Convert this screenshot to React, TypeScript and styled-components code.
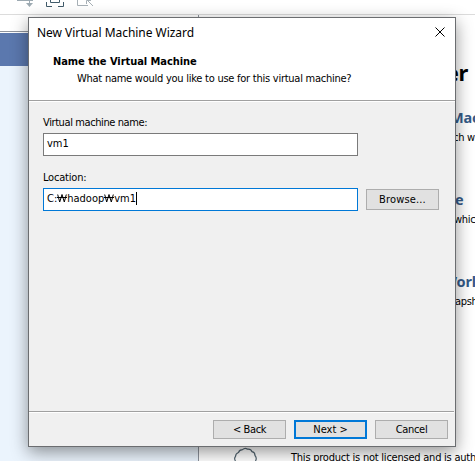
import React from "react";
import styled, { createGlobalStyle } from "styled-components";

const GlobalStyle = createGlobalStyle`
  body { margin: 0; overflow: hidden; background: #fff; }
  * { box-sizing: border-box; }
`;

const Desktop = styled.div`
  position: relative;
  display: flex;
  flex-direction: column;
  width: 475px;
  height: 461px;
  overflow: hidden;
  background: #fff;
  color: #000;
  font-family: "DejaVu Sans Condensed", "DejaVu Sans", "Noto Sans", sans-serif;
  font-stretch: condensed;
  font-size: 11px;
  line-height: 14px;
`;

const Toolbar = styled.div`
  height: 15px;
  flex: none;
  border-bottom: 1px solid #dcdcdc;
`;

const Workspace = styled.div`
  display: flex;
  flex: 1;
  min-height: 0;
`;

const Library = styled.div`
  display: flex;
  flex-direction: column;
  flex: none;
  width: 199px;
  border-right: 1px solid #8c929b;
  background: #ebf4fd;
`;

const LibraryTabs = styled.div`
  height: 18px;
  background: #fff;
  border-bottom: 1px solid #fff;
  box-shadow: inset 0 -1px #8e939c;
`;

const LibraryHeader = styled.div`
  height: 33px;
  background: #5b78ae;
`;

const Home = styled.div`
  flex: 1;
  min-width: 0;
  display: flex;
  flex-direction: column;
  align-items: flex-end;
  overflow: hidden;
  white-space: nowrap;
`;

const HomeTitle = styled.div`
  margin: 42px 7px 19px 0;
  height: 30px;
  font: 700 22px/30px "Noto Sans", sans-serif;
  letter-spacing: -0.3px;
`;

const Action = styled.div`
  width: 46px;
  height: 82px;
  flex: none;
  display: flex;
  flex-direction: column;
  align-items: flex-start;
`;

const ActionTitle = styled.div<{ $shift: number }>`
  margin-left: ${(p) => p.$shift}px;
  height: 25px;
  color: #355a87;
  font: 700 14.5px/22px "Noto Sans", sans-serif;
  letter-spacing: -0.2px;
`;

const ActionText = styled.div<{ $shift: number }>`
  margin-left: ${(p) => p.$shift}px;
  letter-spacing: -0.3px;
`;

const License = styled.div`
  display: flex;
  align-items: flex-start;
  width: 100%;
  padding-left: 35px;
  margin-top: auto;
  height: 14px;
`;

const Seal = styled.svg`
  flex: none;
  width: 24px;
  height: 14px;
`;

const LicenseText = styled.div`
  margin: 4px 0 0 33px;
  letter-spacing: -0.23px;
`;

const Dialog = styled.section`
  position: absolute;
  left: 28px;
  top: 17px;
  width: 428px;
  height: 430px;
  display: flex;
  flex-direction: column;
  border: 1px solid #6b6d70;
  background: #f0f0f0;
  box-shadow: 0 5px 16px rgba(0, 0, 0, 0.42);
  white-space: nowrap;
`;

const TitleBar = styled.header`
  display: flex;
  justify-content: space-between;
  height: 30px;
  padding: 5px 9px 0 8px;
  background: #fff;
  font: 12px/19px "Noto Sans", sans-serif;
`;

const Banner = styled.div`
  height: 54px;
  flex: none;
  padding: 7px 0 0 24px;
  background: #fff;
  border-bottom: 1px solid #fff;
  box-shadow: inset 0 -1px #a0a0a0;
`;

const Heading = styled.div`
  height: 17px;
  font-weight: 700;
  letter-spacing: -0.05px;
`;

const Question = styled.div`
  padding-left: 24px;
`;

const Form = styled.main`
  flex: 1;
  display: flex;
  flex-direction: column;
  padding: 14px 0 0 14px;
`;

const Label = styled.label<{ $height: number }>`
  height: ${(p) => p.$height}px;
`;

const Field = styled.div<{ $focused?: boolean }>`
  display: flex;
  align-items: center;
  width: 315px;
  height: 23px;
  padding: 0 0 2px 3px;
  background: #fff;
  border: 1px solid ${(p) => (p.$focused ? "#0078d7" : "#7a7a7a")};
`;

const FieldRow = styled.div<{ $gap?: number }>`
  display: flex;
  gap: 8px;
  align-items: center;
  height: 23px;
  margin-bottom: ${(p) => p.$gap ?? 0}px;
`;

const Won = styled.svg`
  width: 10px;
  height: 9px;
  margin-bottom: 1px;
`;

const Caret = styled.span`
  width: 1px;
  height: 13px;
  background: #000;
`;

const Button = styled.button<{ $primary?: boolean; $tall?: boolean; $ls?: number }>`
  width: 73px;
  height: ${(p) => (p.$tall ? 21 : 19)}px;
  padding: 0;
  color: #000;
  font: inherit;
  font-stretch: condensed;
  letter-spacing: ${(p) => p.$ls ?? 0}px;
  background: #e1e1e1;
  border: ${(p) => (p.$primary ? "2px solid #0078d7" : "1px solid #adadad")};
`;

const Footer = styled.footer`
  display: flex;
  justify-content: flex-end;
  gap: 8px;
  height: 35px;
  padding: 8px 6px 0 0;
  margin-right: 1px;
  border-top: 1px solid #a0a0a0;
  box-shadow: inset 0 1px #fff;
`;

const Spaced = styled.span<{ $ls: number }>`
  letter-spacing: ${(p) => p.$ls}px;
`;

function WonSign() {
  return (
    <Won viewBox="0 0 10 9" fill="none" stroke="#000">
      <path d="M.7 .5 2.7 8 5 .5 7.3 8 9.300 .5M0 3.500h10" />
    </Won>
  );
}

function ToolbarIcons() {
  return (
    <svg width="110" height="14" viewBox="0 0 110 14" fill="none">
      <path d="M17 .5h16M29.500 0v5" stroke="#9daab2" />
      <path d="M26 3h7l-3.500 4z" fill="#9daab2" />
      <path d="M46.500 2v4.500H52M58 6.500h5.500V2M50.500 0v2.500h9V0" stroke="#415b6a" />
      <path d="M77.500 0v5.500H88M87 0l6 6M86.500 4V.5H91" stroke="#a7b0b6" />
    </svg>
  );
}

export default function App() {
  return (
    <Desktop>
      <GlobalStyle />
      <Toolbar><ToolbarIcons /></Toolbar>
      <Workspace>
        <Library>
          <LibraryTabs />
          <LibraryHeader />
        </Library>
        <Home>
          <HomeTitle>er</HomeTitle>
          <Action>
            <ActionTitle $shift={21}>Mac</ActionTitle>
            <ActionText $shift={24}>ch w</ActionText>
          </Action>
          <Action>
            <ActionTitle $shift={26}>e</ActionTitle>
            <ActionText $shift={25}>whic</ActionText>
          </Action>
          <Action>
            <ActionTitle $shift={14}>Worl</ActionTitle>
            <ActionText $shift={26}>apsh</ActionText>
          </Action>
          <License>
            <Seal viewBox="0 0 24 14" fill="none" stroke="#536570" strokeWidth="1.2">
              <path d="M1.500 14Q-.2 11.500 1.500 9.500 1.600 6.500 4.500 5.500 5.500 2.800 8.500 2.700 11 .2 13.500 2.200 17 1.800 18 4.700 21 5.400 21 8.500 23.200 11 21.500 14" />
            </Seal>
            <LicenseText>This product is not licensed and is auth</LicenseText>
          </License>
        </Home>
      </Workspace>
      <Dialog>
        <TitleBar>
          <Spaced $ls={-0.04}>New Virtual Machine Wizard</Spaced>
          <svg width="12" height="20" viewBox="0 0 12 20" stroke="#000" fill="none">
            <path d="m1.500 4.500 9 9m0-9-9 9" />
          </svg>
        </TitleBar>
        <Banner>
          <Heading>Name the Virtual Machine</Heading>
          <Question><Spaced $ls={-0.25}>What name would you like to use for this virtual machine?</Spaced></Question>
        </Banner>
        <Form>
          <Label $height={17}><Spaced $ls={-0.4}>Virtual machine name:</Spaced></Label>
          <FieldRow $gap={15}><Field>vm1</Field></FieldRow>
          <Label $height={17}><Spaced $ls={-0.2}>Location:</Spaced></Label>
          <FieldRow>
            <Field $focused>C:<WonSign />hadoop<WonSign />vm1<Caret /></Field>
            <Button $tall $ls={0.15}>Browse...</Button>
          </FieldRow>
        </Form>
        <Footer>
          <Button $ls={-0.4}>&lt; Back</Button>
          <Button $primary>Next &gt;</Button>
          <Button $ls={-0.3}>Cancel</Button>
        </Footer>
      </Dialog>
    </Desktop>
  );
}
